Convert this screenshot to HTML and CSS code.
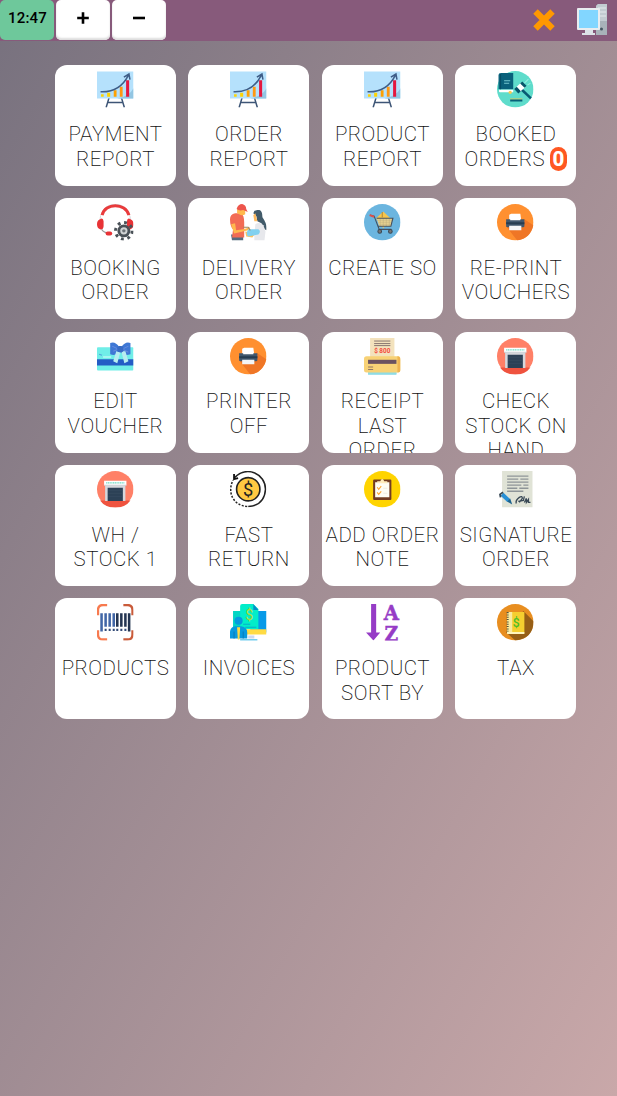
FILE: index.html
```html
<!DOCTYPE html>
<html lang="en">
<head>
<meta charset="utf-8">
<title>POS Menu</title>
<link rel="stylesheet" href="styles.css">
</head>
<body>
<svg class="defs" width="0" height="0">
<defs>
<symbol id="chart" viewBox="0 0 36 36">
<path d="M12 26L9 36M24 26L27 36M11 31H25" stroke="#3d5576" stroke-width="1.5" fill="none"/>
<path d="M0 .5H36V27H0Z" fill="#b5e1fc"/><path d="M36 17V27H20Q32 25 36 17Z" fill="#93c6e3"/>
<path d="M4 23H6.600V25.500H4Z" fill="#fed402"/><path d="M10 21.500H13V25.500H10Z" fill="#fed402"/><path d="M16.500 19H19.300V25.500H16.500Z" fill="#ffa100"/><path d="M22.500 15.500H25.300V25.500H22.500Z" fill="#ff9811"/><path d="M28.700 9H31.700V25.500H28.700Z" fill="#e4183f"/>
<path d="M3.500 20.500C15 21 25 16 31 4M26.500 6L31.500 3L32.500 8.500" stroke="#3e5d87" stroke-width="1.500" fill="none"/>
</symbol>
<symbol id="auction" viewBox="0 0 36 36">
<circle cx="18" cy="18" r="18" fill="#5fdccb"/>
<path d="M1.500 4Q1.500 2 4 2H16V18H1.500Z" fill="#09617b"/><path d="M2 18.500H16V21H3Q2 21 2 20Z" fill="#fff"/><path d="M3.500 3V18" stroke="#054c65"/><path d="M7 9.500H13M7 12H12" stroke="#75c8d0"/><circle cx="13" cy="21" r="1.600" fill="#f8ca54"/>
<path d="M13 27H25V28H13Z" fill="#e6ca55"/><path d="M13 28H25V30H13Z" fill="#086078"/>
<path d="M24 18L33.500 27" stroke="#075a73" stroke-width="2.500"/><path d="M20.500 18.500L26 13.500" stroke="#fff" stroke-width="6"/><path d="M19 20L21.500 17.700M25 14.500L27 12.500" stroke="#07566b" stroke-width="6"/><path d="M27 12L31 8M30 14L33 12" stroke="#98eee1"/>
</symbol>
<symbol id="headset" viewBox="0 0 36 36">
<path d="M3 16C4-5 32-5 33 16" stroke="#d7dadd" stroke-width="1" fill="none"/>
<path d="M5 11C8-1.500 28-1.500 31.500 11" stroke="#e93b3c" stroke-width="3" fill="none"/>
<path d="M3 15Q6 13 6.500 17V22Q6 26 3 25Q0 24 0 20Q0 16 3 15Z" fill="#e83336"/><path d="M33 15Q30 13 29.500 17V22Q30 26 33 25Q36 24 36 20Q36 16 33 15Z" fill="#e83336"/>
<path d="M4.500 25Q6 28 10 28.500" stroke="#999" fill="none"/><rect x="8.500" y="27" width="6.500" height="4" rx="2" fill="#e83336"/>
<circle cx="26.500" cy="26.500" r="8.200" fill="none" stroke="#4a5157" stroke-width="3" stroke-dasharray="2.800 3.640"/><circle cx="26.500" cy="26.500" r="5" fill="#d1d4d5" stroke="#4a5157" stroke-width="2.800"/><circle cx="26.500" cy="26.500" r="1.700" fill="#6d7377"/>
</symbol>
<symbol id="delivery" viewBox="0 0 36 36">
<path d="M1 30H13V36H2Z" fill="#566b7e"/><path d="M0 15Q0 10 5 9H11Q14 11 14 18V33H2L3 25Q0 22 0 15Z" fill="#f26c54"/>
<path d="M7 4H15V10Q12 12 9 10L7 9Z" fill="#ffb94d"/><path d="M6.500 5Q8 0 12 0Q16 1 16 5L17.500 8L13 6Q9 7 6.500 5Z" fill="#ed554c"/>
<path d="M1 20L4 29L18 26L20 23L13 25L6 26L5 19Z" fill="#ffb94d"/>
<path d="M23 9Q24 5 29 6Q32 7 32 13Q37 20 36 26Q33 25 31 19L27 17L26 12Z" fill="#425b6a"/><path d="M23 11L25 9L27 17H24Z" fill="#ffbc61"/>
<path d="M25 20Q29 17 33 21L35 27L34 36H24V30Z" fill="#e7e8ec"/><path d="M15 27L25 29L22 33L16 32Z" fill="#ffc35e"/>
<path d="M18 25L28 25Q31 27 28 30L18 32Q15 30 18 25Z" fill="#81d1f0"/><path d="M13 23L18 23L20 26" stroke="#9c895d" fill="none"/>
</symbol>
<symbol id="cart" viewBox="0 0 36 36">
<circle cx="18" cy="18" r="18" fill="#6bb5df"/><path d="M12 14L19 7.500L26 14L19 24Z" fill="#f7c64c"/><path d="M18 8V13" stroke="#ae8738"/>
<path d="M12.500 14H28L26.500 22H15Z" fill="#ead593"/><path d="M13 16H28M14 18H27M15 20H27M16 14V22M19 14V22M22 14V22M25 14V22" stroke="#bbab7e" stroke-width=".5"/>
<path d="M6 11L10 12L15 25H27M12.500 14H28.500L26.500 22H14" stroke="#46515e" stroke-width="1.100" fill="none"/><path d="M5.500 11L10 12.500" stroke="#df4e48" stroke-width="2"/><circle cx="15.500" cy="27" r="1.800" fill="#777" stroke="#384653"/><circle cx="26" cy="27" r="1.800" fill="#777" stroke="#384653"/>
</symbol>
<symbol id="printer" viewBox="0 0 36 36">
<circle cx="18" cy="18" r="18" fill="#ff9030"/><path d="M27 15L35.800 21Q33 34 20 36L9 22Z" fill="#ef7626"/>
<path d="M12 10.500L14 9.500H23L24 17H12Z" fill="#fff"/><path d="M9 15H27V22Q27 23 25.500 23H10.500Q9 23 9 22Z" fill="#40576d"/><path d="M9 18H27V20H9Z" fill="#263c50"/><path d="M13 13H23V16H13Z" fill="#fff"/><path d="M12 21.500H24V26H12Z" fill="#f3f5f7"/>
</symbol>
<symbol id="gift" viewBox="0 0 36 36">
<rect y="9" width="36" height="23" rx="1" fill="#70eee8"/><path d="M0 21H36V27H0Z" fill="#245cc5"/><path d="M6 18.700H14" stroke="#baf8f5" stroke-width="1.500"/><path d="M2 16L5 17" stroke="#50a5d8"/>
<path d="M13 5Q18 3 22 9H24Q28 3 33 5L33 16Q27 18 23 14Q18 18 13 16Z" fill="#3f78d5"/><path d="M15 8L21 11L16 13M31 8L25 11L31 14" stroke="#668bde" fill="none"/>
<path d="M19 13L23 14L20 25L16 23Z M24 13H28L31 23L27 25Z" fill="#b7edf0"/><rect x="20" y="8" width="6" height="6" rx="2" fill="#386bc4"/>
</symbol>
<symbol id="receipt" viewBox="0 0 36 36">
<path d="M6 0H30V22H6Z" fill="#f3e2bd"/><path d="M10 3H26M10 5.500H26M10 7.500H26" stroke="#7e6d6b" stroke-width=".9"/><text class="amount" x="18" y="15" text-anchor="middle" textLength="16" lengthAdjust="spacingAndGlyphs">$ 800</text>
<path d="M4 31H32V37H4Z" fill="#48c6d8"/><path d="M4 34H32V35H4Z" fill="#d6f1ef"/><rect y="18" width="36" height="16" rx="2.500" fill="#f8d276"/><path d="M33 18Q36 18 36 22V31Q36 34 33 34Z" fill="#eeb451"/><rect x="4" y="21.500" width="28" height="4" fill="#6b5260"/><path d="M4 28.500H9M4 31H9" stroke="#927965"/>
</symbol>
<symbol id="warehouse" viewBox="0 0 36 36">
<circle cx="18" cy="18" r="18" fill="#ff8067"/><path d="M3 29H33Q28 36 18 36Q8 36 3 29Z" fill="#ef533f"/><path d="M8 13H28V29.500H8Z" fill="#d5d7dc"/><path d="M7 9.500H29V14H7Z" fill="#fff"/><path d="M7 14H29" stroke="#cbd0d5"/><path d="M10.500 16.500H25.500V29.500H10.500Z" fill="#2c4156"/><path d="M11 19H25M11 22H25M11 25H25" stroke="#3b5065" stroke-width=".5"/><path d="M9 11.700H27" stroke="#6bd9c3" stroke-width="1.400" stroke-dasharray="1.200 .5"/>
</symbol>
<symbol id="return" viewBox="0 0 36 36">
<path d="M4 7C17-6 35 3 35 18Q34 34 18 35" stroke="#222" stroke-width="1.500" fill="none"/><path d="M17 35C3 34-3 21 3 9" stroke="#222" stroke-width="1.500" fill="none" stroke-dasharray="2 1.500"/><path d="M4 3V8L8 7" stroke="#111" stroke-width="1.800" fill="none"/><circle cx="18" cy="18" r="11.500" fill="#ffc942" stroke="#222" stroke-width="1.600"/><text class="coin" x="18" y="24.300" text-anchor="middle">$</text>
</symbol>
<symbol id="note" viewBox="0 0 36 36">
<circle cx="18" cy="18" r="18" fill="#ffd400"/><rect x="9" y="8.500" width="18" height="20" rx="1" fill="#733c22"/><path d="M11 11H25V26H11Z" fill="#fffdf5"/><path d="M13 12V10H16Q18 6 20 10H23V12Z" fill="#ffebbc"/><path d="M13 16L14.500 18L17 15M13 21L14.500 23L17 20" stroke="#ffa530" stroke-width="1.100" fill="none"/><path d="M19 17H23M19 22H23" stroke="#f2ede0"/>
</symbol>
<symbol id="signature" viewBox="0 0 36 36">
<path d="M5 0H35V36H5Z" fill="#e0e3d6"/><path d="M10 5H31M10 8H21M23 8H31M10 11H31M10 14H24M26 14H31M10 17H20M22 17H31M10 20H26" stroke="#8e9598" stroke-width="1.300"/>
<path d="M5 23L11.500 29" stroke="#2990d6" stroke-width="4"/><path d="M10 30L13 27L15 33Z" fill="#1b628c"/><path d="M3.500 26L3 23L6 21" stroke="#394956" stroke-width="1.800" fill="none"/><path d="M19 32Q18 29 22 26Q25 24 25 27L22 31M21 30L26 29L27 25M27 31L29 27V31L31 28V31H33" stroke="#394956" stroke-width="1.300" fill="none"/>
</symbol>
<symbol id="barcode" viewBox="0 0 36 36">
<g fill="none" stroke-width="2.300"><path d="M1 11V6Q1 1 6 1H10M10 35H6Q1 35 1 30V26" stroke="#f77a4f"/><path d="M26 1H30Q35 1 35 6V11M35 26V30Q35 35 30 35H26" stroke="#c95b3a"/></g>
<g stroke-width="2.500"><path d="M4.500 9V27M8.500 9V22.500M12.500 9V22.500M16.500 9V22.500" stroke="#4166a6"/><path d="M20 9V22.500M24 9V22.500M28 9V22.500M31.700 9V27" stroke="#243551"/></g>
<path d="M7.500 25.500H9.500M11.500 25.500H13.500M15.500 25.500H17.500M19 25.500H21M23 25.500H25M27 25.500H29" stroke="#344c78" stroke-width="2.300"/>
</symbol>
<symbol id="invoice" viewBox="0 0 36 36">
<path d="M20 7H36V28H20Z" fill="#079ae8"/><path d="M3 7H15V24H3Z" fill="#03d5c4"/><path d="M10 2Q10 0 12 0H23L28 5V25H10Z" fill="#02edc9"/><path d="M23 0V6H28Z" fill="#078dc9"/><path d="M15 25H36V30H15Z" fill="#ffdb43"/><path d="M18 31H24V34H18Z" fill="#cdd9f0"/><path d="M10 35.500H27" stroke="#42bce9" stroke-width="1.500"/><path d="M13 20H20M15 23H26" stroke="#07adca"/><circle cx="8.500" cy="16.500" r="4" fill="#0799df"/><path d="M0 34V27Q1 22 6 22H11Q17 23 17 28V34Z" fill="#0799df"/><path d="M4 27V34M13 27V34" stroke="#087ab7"/><path d="M7 23H10L9.300 35H7.700Z" fill="#ffdb43"/><text class="invoice-dollar" x="19" y="16" text-anchor="middle">$</text>
</symbol>
<symbol id="sort" viewBox="0 0 36 36">
<path d="M7 0H12V28H16L9.300 36L2 28H7Z" fill="#963cc6"/><text class="sort-letter" x="27" y="15.500" text-anchor="middle" textLength="15" lengthAdjust="spacingAndGlyphs">A</text><text class="sort-letter" x="27" y="36" text-anchor="middle" textLength="13.500" lengthAdjust="spacingAndGlyphs">Z</text>
</symbol>
<symbol id="tax" viewBox="0 0 36 36">
<circle cx="18" cy="18" r="18" fill="#e88e20"/><path d="M26 7L36 17Q36 34 18 36L9 28Z" fill="#975f16"/><path d="M10 8H27V29H10Z" fill="#f5ce2f"/><path d="M10 8H15V29H10Z" fill="#faeaa0"/><path d="M10 27.500H27V29.500H10Z" fill="#fff5bc"/><path d="M10.500 8V27" stroke="#55523c" stroke-width="2" stroke-dasharray="1 1.300"/><text class="tax-dollar" x="19" y="22.500" text-anchor="middle">$</text>
</symbol>
</defs>
</svg>
<header class="topbar">
<div class="key clock">12:47</div>
<button class="key" aria-label="Increase"><svg width="14" height="14"><path d="M7 1.200V12.800M1.200 7H12.800" stroke="#000" stroke-width="2.600"/></svg></button>
<button class="key" aria-label="Decrease"><svg width="14" height="14"><path d="M1 7H13" stroke="#000" stroke-width="2.600"/></svg></button>
<div class="actions">
<svg class="close" viewBox="0 0 24 24"><path d="M3.500 3.500L20.500 20.500M20.500 3.500L3.500 20.500" stroke="#ff9800" stroke-width="6.300"/></svg>
<svg class="computer" viewBox="0 0 32 33"><path d="M20 3L22 1H31V32H20Z" fill="#a8b2b9"/><path d="M20 3L22 1H31V18H20Z" fill="#c2cbd1"/><path d="M22 5H30M22 9H30M22 13H30" stroke="#e4e9ec"/><circle cx="25.500" cy="26" r="1.500" fill="#465762"/><rect x="1" y="5" width="23" height="22" rx="1" fill="#e9edf0"/><path d="M3 7H22V25H3Z" fill="#82d6ff"/><path d="M9 27H17V30H19V32H6V30H9Z" fill="#dce2e7"/></svg>
</div>
</header>
<main class="grid">
<button class="tile"><svg><use href="#chart"/></svg><span>PAYMENT REPORT</span></button>
<button class="tile"><svg><use href="#chart"/></svg><span>ORDER<br>REPORT</span></button>
<button class="tile"><svg><use href="#chart"/></svg><span>PRODUCT REPORT</span></button>
<button class="tile"><svg><use href="#auction"/></svg><span>BOOKED<br>ORDERS <b class="count">0</b></span></button>
<button class="tile"><svg><use href="#headset"/></svg><span>BOOKING ORDER</span></button>
<button class="tile"><svg><use href="#delivery"/></svg><span>DELIVERY ORDER</span></button>
<button class="tile"><svg><use href="#cart"/></svg><span>CREATE SO</span></button>
<button class="tile"><svg><use href="#printer"/></svg><span>RE-PRINT VOUCHERS</span></button>
<button class="tile"><svg><use href="#gift"/></svg><span>EDIT<br>VOUCHER</span></button>
<button class="tile"><svg><use href="#printer"/></svg><span>PRINTER<br>OFF</span></button>
<button class="tile"><svg><use href="#receipt"/></svg><span>RECEIPT<br>LAST<br>ORDER</span></button>
<button class="tile"><svg><use href="#warehouse"/></svg><span>CHECK<br>STOCK ON<br>HAND</span></button>
<button class="tile"><svg><use href="#warehouse"/></svg><span>WH /<br>STOCK 1</span></button>
<button class="tile"><svg><use href="#return"/></svg><span>FAST<br>RETURN</span></button>
<button class="tile"><svg><use href="#note"/></svg><span>ADD ORDER<br>NOTE</span></button>
<button class="tile"><svg><use href="#signature"/></svg><span>SIGNATURE ORDER</span></button>
<button class="tile"><svg><use href="#barcode"/></svg><span>PRODUCTS</span></button>
<button class="tile"><svg><use href="#invoice"/></svg><span>INVOICES</span></button>
<button class="tile"><svg><use href="#sort"/></svg><span>PRODUCT<br>SORT BY</span></button>
<button class="tile"><svg><use href="#tax"/></svg><span>TAX</span></button>
</main>
</body>
</html>
```

FILE: styles.css
```css
* { box-sizing: border-box; }
body {
  margin: 0;
  height: 1096px;
  overflow: hidden;
  font-family: Roboto, sans-serif;
  background: linear-gradient(to right bottom, #77717e, #c9a8a9);
}
button { border: 0; padding: 0; font-family: inherit; }
.defs { display: block; }
.topbar {
  display: flex;
  gap: 2px;
  height: 40.5px;
  background: #875a7b;
}
.key {
  width: 54px;
  height: 40px;
  display: flex;
  align-items: center;
  justify-content: center;
  padding-bottom: 4px;
  border-radius: 5px;
  background: #fff;
  box-shadow: inset 0 -2px 2px #ddd;
}
.clock {
  background: #6ec89b;
  box-shadow: none;
  padding-left: 1px;
  font-size: 15px;
  font-weight: 500;
  letter-spacing: .2px;
}
.actions {
  display: flex;
  align-items: center;
  margin-left: auto;
  padding-right: 9px;
}
.close { width: 24px; height: 24px; margin-right: 20px; }
.computer { width: 32px; height: 33px; margin-top: -2px; }
.grid {
  display: grid;
  grid-template-columns: repeat(4, 121px);
  grid-auto-rows: 121px;
  gap: 12.400px 12.500px;
  padding: 24.300px 0 0 54.500px;
}
.tile {
  display: flex;
  flex-direction: column;
  align-items: center;
  justify-content: flex-start;
  overflow: hidden;
  padding-top: 6px;
  border-radius: 12px;
  background: #fff;
  color: #111;
  font-size: 20.500px;
  font-weight: 200;
  line-height: 24.500px;
  letter-spacing: .5px;
}
.tile > span { padding-left: 1px; }
.tile > svg {
  flex: none;
  width: 36.500px;
  height: 36.500px;
  margin-bottom: 15.200px;
  overflow: visible;
}
.count {
  display: inline-block;
  margin-left: -1px;
  padding: 0 3px;
  border-radius: 9px;
  background: #ff5722;
  color: #fff;
  font-weight: 800;
  letter-spacing: 0;
}
.amount { font: 700 8px Roboto, sans-serif; fill: #f44c3c; letter-spacing: 0; }
.coin { font: 400 18px Roboto, sans-serif; fill: #222; letter-spacing: 0; }
.invoice-dollar { font: 400 14px Roboto, sans-serif; fill: #b0da38; letter-spacing: 0; }
.tax-dollar { font: 500 12px Roboto, sans-serif; fill: #4abf28; letter-spacing: 0; }
.sort-letter {
  font: 700 21px "DejaVu Serif", serif;
  fill: #963cc6;
  stroke: #963cc6;
  stroke-width: .5px;
  letter-spacing: 0;
}
```
